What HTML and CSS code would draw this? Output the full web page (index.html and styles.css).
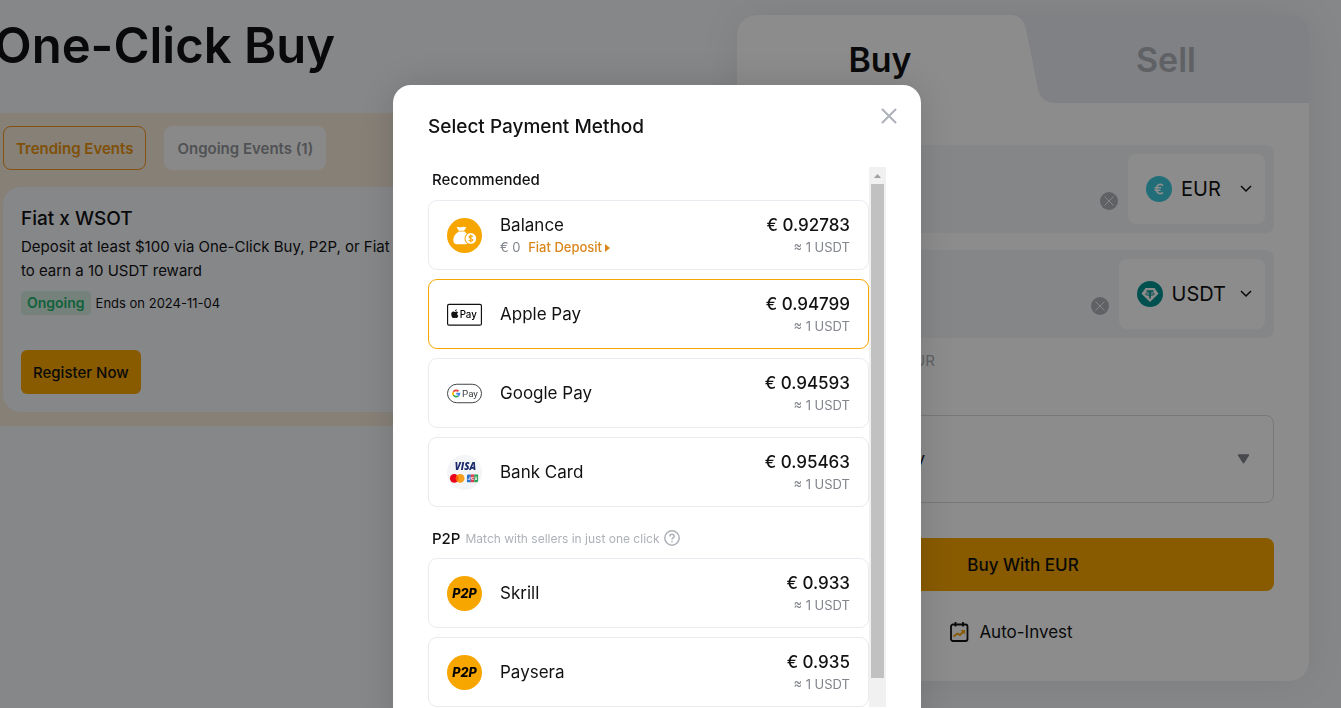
FILE: index.html
```html
<!DOCTYPE html>
<html lang="en">
  <head>
    <meta charset="UTF-8" />
    <meta name="viewport" content="width=device-width, initial-scale=1.0" />
    <title>One-Click Buy</title>
    <link rel="stylesheet" href="styles.css">
  </head>
  <body>
    <main class="page">
      <section class="events">
        <h1 class="page-title">One-Click Buy</h1>
        <div class="events-panel">
          <div class="events-tabs">
            <button class="events-tab active">Trending Events</button>
            <button class="events-tab">Ongoing Events (1)</button>
          </div>
          <article class="event-card">
            <h2>Fiat x WSOT</h2>
            <p class="event-text">Deposit at least $100 via One-Click Buy, P2P, or Fiat Deposit<br>to earn a 10 USDT reward</p>
            <div class="event-status">
              <span class="badge">Ongoing</span>
              <span class="date">Ends on 2024-11-04</span>
            </div>
            <button class="register">Register Now</button>
          </article>
        </div>
      </section>

      <section class="trade">
        <div class="trade-tabs">
          <svg class="trade-shape" viewBox="0 0 572 88" preserveAspectRatio="none">
            <path d="M273 0C282 0 287 5 289 14L301 74C303 84 310 88 320 88H572V20Q572 0 552 0Z" fill="#e9ebf2" />
          </svg>
          <button class="trade-tab active">Buy</button>
          <button class="trade-tab">Sell</button>
        </div>
        <div class="trade-body">
          <div class="field">
            <input class="amount" type="text" value="10" aria-label="I want to pay">
            <button class="clear" aria-label="Clear">
              <svg viewBox="0 0 18 18"><circle cx="9" cy="9" r="9" fill="#adb1b8" /><path d="M4.500 4.500l9 9M13.500 4.500l-9 9" stroke="#f3f5f7" fill="none" /></svg>
            </button>
            <button class="currency">
              <svg class="coin" viewBox="0 0 26 26">
                <circle cx="13" cy="13" r="13" fill="#3cc8dc" />
                <path d="M17 9.500C14 7.200 10.500 8.500 10.500 13S14 18.800 17 16.500M8.500 11.800H15M8.500 14.300H14.500" fill="none" stroke="#fff" stroke-width="1.600" />
              </svg>
              <span>EUR</span>
              <svg class="chevron" viewBox="0 0 12 8"><path d="M1 1l5 5 5-5" /></svg>
            </button>
          </div>
          <div class="field">
            <input class="amount" type="text" value="10.54" aria-label="I will receive">
            <button class="clear" aria-label="Clear">
              <svg viewBox="0 0 18 18"><circle cx="9" cy="9" r="9" fill="#adb1b8" /><path d="M4.500 4.500l9 9M13.500 4.500l-9 9" stroke="#f3f5f7" fill="none" /></svg>
            </button>
            <button class="currency">
              <svg class="coin" viewBox="0 0 26 26">
                <circle cx="13" cy="13" r="13" fill="#009393" />
                <path d="M8.500 7H17.500L21.500 12.700L13 21L4.500 12.700Z" fill="#fff" />
                <path d="M9.500 10H16.500M13 10V17.500" stroke="#009393" stroke-width="1.600" />
                <ellipse cx="13" cy="13" rx="4.500" ry="1.200" fill="none" stroke="#009393" />
              </svg>
              <span>USDT</span>
              <svg class="chevron" viewBox="0 0 12 8"><path d="M1 1l5 5 5-5" /></svg>
            </button>
          </div>
          <p class="rate">1 USDT ≈ 0.94799 EUR</p>
          <button class="method">
            <span class="method-icon"></span>
            <span>Apple Pay</span>
            <svg class="caret" viewBox="0 0 12 10"><path d="M1.500 1h9L6 8z" fill="#81858c" stroke="#81858c" stroke-width="1.500" stroke-linejoin="round" /></svg>
          </button>
          <button class="submit">Buy With EUR</button>
          <a class="auto-invest" href="#">
            <svg viewBox="0 0 20 22">
              <rect x="2" y="3.500" width="16.500" height="16.500" rx="2" fill="none" stroke="#121214" stroke-width="1.800" />
              <path d="M6.500 1v4.500M14 1v4.500" stroke="#121214" stroke-width="1.800" />
              <path d="M4.500 15.500l4-3 2.500 1.500 4-4" fill="none" stroke="#f7a600" stroke-width="1.800" />
              <path d="M11.500 9H16v4.500z" fill="#f7a600" />
            </svg>
            <span>Auto-Invest</span>
          </a>
        </div>
      </section>
    </main>

    <div class="overlay">
      <div class="modal" role="dialog" aria-labelledby="modal-title">
        <header class="modal-header">
          <h2 id="modal-title">Select Payment Method</h2>
          <button class="close" aria-label="Close">
            <svg viewBox="0 0 16 16"><path d="M1.500 1.500l13 13M14.500 1.500l-13 13" stroke="#adb1b8" stroke-width="2" stroke-linecap="round" /></svg>
          </button>
        </header>
        <div class="modal-body">
          <div class="list">
            <h3 class="group">Recommended</h3>
            <div class="option">
              <svg class="icon" viewBox="0 0 36 36">
                <circle cx="18" cy="18" r="18" fill="#f7a600" />
                <path d="M10 9.500C12 8.500 13 10 14.500 9.500S17 8.500 20 9.500L17.500 13H12Z" fill="#fff" />
                <path d="M12 14H18C21 16 23 19 23 22.500C23 25.500 21.500 27 19 27H10.500C8 27 6.500 25.500 6.500 22.500C6.500 19 9 16 12 14Z" fill="#fff" />
                <circle cx="24.500" cy="21" r="6.500" fill="#f7a600" />
                <circle cx="24.500" cy="21" r="5.500" fill="#fff" />
                <path d="M26.500 19.200C25.500 17.900 22.700 18.100 22.700 19.700S26.500 21 26.500 22.600S23.300 24.200 22.400 22.700M24.500 17V25" fill="none" stroke="#f7a600" stroke-width="1.200" />
              </svg>
              <div class="name">
                <span>Balance</span>
                <small>€ 0 <a href="#">Fiat Deposit <svg class="arrow" viewBox="0 0 5 8"><path d="M0 0l5 4-5 4z" fill="#d9861b" /></svg></a></small>
              </div>
              <div class="price"><span>€ 0.92783</span><small>≈ 1 USDT</small></div>
            </div>
            <button class="option selected">
              <svg class="icon" viewBox="0 0 36 36">
                <rect x="0.600" y="7.500" width="34.800" height="21.500" rx="1.500" fill="#fff" stroke="#121214" stroke-width="1.200" />
                <path d="M10.600 15.200C9.700 14.700 9 15.300 8.300 15.300C7.500 15.300 7 14.800 6.200 15C4.500 15.400 4 17.300 4.600 19.200C5 20.600 5.900 21.800 6.700 21.700C7.300 21.600 7.600 21.300 8.300 21.300S9.200 21.700 9.800 21.700C10.700 21.600 11.400 20.400 11.700 19.400C10 18.600 10.100 16.500 11.500 15.800C11.300 15.500 11 15.300 10.600 15.200ZM8.200 14.700C8.200 13.600 9 12.700 10 12.600C10.100 13.700 9.200 14.700 8.200 14.700Z" fill="#121214" />
                <text class="apple-word" x="13" y="21.500">Pay</text>
              </svg>
              <span class="name">Apple Pay</span>
              <span class="price"><span>€ 0.94799</span><small>≈ 1 USDT</small></span>
            </button>
            <button class="option">
              <svg class="icon" viewBox="0 0 36 36">
                <rect x="0.500" y="8.500" width="35" height="19" rx="9.500" fill="#fff" stroke="#3c4043" />
                <g fill="none" stroke-width="1.800">
                  <path d="M11.800 15.900A3.300 3.300 0 0 0 6.600 16.300" stroke="#ea4335" />
                  <path d="M6.600 16.300A3.300 3.300 0 0 0 6.600 19.700" stroke="#fbbc04" />
                  <path d="M6.600 19.700A3.300 3.300 0 0 0 11.600 20.400" stroke="#34a853" />
                  <path d="M11.600 20.400A3.300 3.300 0 0 0 12.700 18.200H9.500" stroke="#4285f4" />
                </g>
                <text class="google-word" x="15.500" y="21.500">Pay</text>
              </svg>
              <span class="name">Google Pay</span>
              <span class="price"><span>€ 0.94593</span><small>≈ 1 USDT</small></span>
            </button>
            <button class="option">
              <svg class="icon" viewBox="0 0 36 36">
                <circle cx="18" cy="18" r="18" fill="#f3f5f7" />
                <text class="visa-word" x="8" y="15.500">VISA</text>
                <circle cx="7.500" cy="24" r="4.500" fill="#eb001b" />
                <circle cx="13.500" cy="24" r="4.500" fill="#f79e1b" />
                <path d="M10.500 20.700A4.500 4.500 0 0 1 10.500 27.300A4.500 4.500 0 0 1 10.500 20.700Z" fill="#ff5f00" />
                <path d="M22 20H24.500V28H20.500V21.500Q20.500 20 22 20Z" fill="#2b70c9" />
                <path d="M24.500 20H28V28H24.500Z" fill="#e03a50" />
                <path d="M28 20H32V26.500Q32 28 30.500 28H28Z" fill="#28a055" />
                <path d="M23.500 22.500V25H21.200M27.500 23H25.300V25H27.500M28.800 22.800H31M28.800 24H31M28.800 25.200H31" fill="none" stroke="#fff" stroke-width="0.800" />
              </svg>
              <span class="name">Bank Card</span>
              <span class="price"><span>€ 0.95463</span><small>≈ 1 USDT</small></span>
            </button>

            <h3 class="group p2p-group">P2P
              <small>Match with sellers in just one click</small>
              <svg class="help" viewBox="0 0 16 16">
                <circle cx="8" cy="8" r="7.200" fill="none" stroke="#adb1b8" stroke-width="1.500" />
                <path d="M5.900 6.400C5.900 3.700 10.200 3.700 10.200 6.300C10.200 7.900 8 7.900 8 9.500M8 10.700V12.200" fill="none" stroke="#adb1b8" stroke-width="1.500" />
              </svg>
            </h3>
            <button class="option">
              <svg class="icon" viewBox="0 0 36 36"><circle cx="18" cy="18" r="18" fill="#f7a600" /><text class="p2p-word" x="18" y="23">P2P</text></svg>
              <span class="name">Skrill</span>
              <span class="price"><span>€ 0.933</span><small>≈ 1 USDT</small></span>
            </button>
            <button class="option">
              <svg class="icon" viewBox="0 0 36 36"><circle cx="18" cy="18" r="18" fill="#f7a600" /><text class="p2p-word" x="18" y="23">P2P</text></svg>
              <span class="name">Paysera</span>
              <span class="price"><span>€ 0.935</span><small>≈ 1 USDT</small></span>
            </button>
          </div>
          <div class="scrollbar">
            <svg viewBox="0 0 17 17"><path d="M5 11l3.500-4 3.500 4z" fill="#a0a0a0" /></svg>
            <div class="thumb"></div>
          </div>
        </div>
      </div>
    </div>
  </body>
</html>
```

FILE: styles.css
```css
* {
  margin: 0;
  padding: 0;
  box-sizing: border-box;
}

body {
  height: 100vh;
  overflow: hidden;
  background-color: #f4f6f9;
  color: #121214;
  font-family: Inter, "Noto Sans", sans-serif;
  font-size: 15px;
}

button,
input {
  border: none;
  background: none;
  color: inherit;
  font: inherit;
}

button {
  cursor: pointer;
}

a {
  color: inherit;
  text-decoration: none;
}

h1,
h2,
h3 {
  font-weight: 500;
}

.page {
  display: grid;
  grid-template-columns: minmax(0, 1fr) minmax(0, 572px);
  gap: 36px;
  align-items: start;
  margin-left: -6px;
  padding: 15px 32px 0 0;
}

/* events */
.page-title {
  font-size: 49px;
  line-height: 62px;
  font-weight: 600;
}

.events-panel {
  margin-top: 36px;
  padding: 13px 9px 14px;
  border-radius: 9px;
  background-color: #f4e9d9;
}

.events-tabs {
  display: flex;
  gap: 18px;
}

.events-tab {
  height: 44px;
  padding: 0 12px;
  border: 1px solid #fafafa;
  border-radius: 8px;
  background-color: #fafafa;
  color: #92959b;
  font-weight: 600;
}

.events-tab.active {
  border-color: #f0941c;
  background: none;
  color: #e8930c;
}

.event-card {
  margin-top: 17px;
  padding: 18px;
  border-radius: 18px;
  background-color: #f4f6f9;
}

.event-card h2 {
  font-size: 19px;
  line-height: 28px;
}

.event-text {
  margin-top: 2px;
  line-height: 24px;
  white-space: nowrap;
}

.event-status {
  display: flex;
  align-items: center;
  gap: 5px;
  margin-top: 8px;
  font-size: 13px;
}

.badge {
  padding: 0 6px;
  border-radius: 4px;
  background-color: #d5ebe1;
  color: #20b26c;
  font-size: 14px;
  line-height: 24px;
  font-weight: 600;
}

.register {
  height: 44px;
  margin-top: 35px;
  padding: 0 12px;
  border-radius: 6px;
  background-color: #f7a600;
  font-weight: 500;
}

/* buy form */
.trade {
  border-radius: 20px;
  background-color: #fff;
  box-shadow: 0 0 40px rgba(18, 18, 20, 0.08);
}

.trade-tabs {
  position: relative;
  display: grid;
  grid-template-columns: 1fr 1fr;
}

.trade-shape {
  position: absolute;
  width: 100%;
  height: 100%;
}

.trade-tab {
  position: relative;
  height: 88px;
  color: #adb1b8;
  font-size: 34px;
  font-weight: 600;
}

.trade-tab.active {
  color: #121214;
}

.trade-body {
  display: flex;
  flex-direction: column;
  padding: 42px 35px 37px;
}

.field {
  display: flex;
  gap: 10px;
  height: 88px;
  margin-bottom: 17px;
  padding: 9px;
  border-radius: 8px;
  background-color: #f3f5f7;
}

.amount {
  flex: 1;
  min-width: 0;
  padding: 24px 9px 0;
  font-size: 20px;
}

.clear {
  padding-top: 24px;
}

.clear svg {
  display: block;
  width: 18px;
}

.currency {
  display: flex;
  align-items: center;
  min-width: 137px;
  padding: 0 13px 0 18px;
  border-radius: 8px;
  background-color: #fff;
  font-size: 20px;
}

.currency span {
  margin-right: 14px;
}

.coin {
  width: 26px;
  margin-right: 9px;
}

.chevron {
  width: 12px;
  margin-left: auto;
  fill: none;
  stroke: #121214;
  stroke-width: 1.5;
}

.rate {
  margin-top: -4px;
  color: #adb1b8;
  line-height: 20px;
}

.method {
  display: flex;
  align-items: center;
  gap: 18px;
  height: 88px;
  margin-top: 44px;
  padding: 0 23px 0 18px;
  border: 1px solid #d7dade;
  border-radius: 8px;
  font-size: 17px;
}

.method-icon {
  width: 35px;
  height: 22px;
  border: 1px solid #121214;
  border-radius: 2px;
}

.caret {
  width: 13px;
  margin-left: auto;
}

.submit {
  height: 53px;
  margin-top: 35px;
  border-radius: 8px;
  background-color: #f7a600;
  font-size: 17px;
  font-weight: 500;
}

.auto-invest {
  display: flex;
  justify-content: center;
  align-items: center;
  gap: 10px;
  margin-top: 29px;
  padding-right: 24px;
  font-size: 17px;
  line-height: 24px;
}

.auto-invest svg {
  width: 20px;
}

/* payment method dialog */
.overlay {
  position: fixed;
  inset: 0;
  display: flex;
  justify-content: center;
  align-items: flex-start;
  padding: 85px 27px 0 0;
  overflow: hidden;
  background-color: rgba(0, 0, 0, 0.45);
}

.modal {
  width: 528px;
  padding: 0 35px 35px;
  border-radius: 18px;
  background-color: #fff;
  box-shadow: 0 0 40px rgba(0, 0, 0, 0.15);
}

.modal-header {
  display: flex;
  justify-content: space-between;
  margin-right: -11px;
}

.modal-header h2 {
  padding: 27px 0 25px;
  font-size: 19px;
  line-height: 30px;
}

.close {
  align-self: flex-start;
  margin-top: 23px;
}

.close svg {
  display: block;
  width: 16px;
}

.modal-body {
  display: flex;
}

.list {
  flex: 1;
  display: flex;
  flex-direction: column;
  gap: 9px;
}

.group {
  display: flex;
  align-items: center;
  gap: 5px;
  height: 24px;
  padding-left: 4px;
  font-size: 15px;
}

.group small {
  color: #adb1b8;
  font-size: 12px;
  font-weight: 400;
}

.p2p-group {
  height: 33px;
  padding-top: 11px;
}

.help {
  width: 16px;
}

.option {
  display: flex;
  align-items: center;
  height: 70px;
  padding: 0 18px;
  border: 1px solid #e9ebf0;
  border-radius: 9px;
  text-align: left;
}

.option.selected {
  border-color: #f7a600;
}

.icon {
  width: 35px;
  margin-right: 18px;
}

.name,
.price {
  display: flex;
  flex-direction: column;
  font-size: 17px;
  line-height: 24px;
}

.name {
  flex: 1;
}

.price {
  text-align: right;
  font-weight: 500;
}

.option small {
  color: #81858c;
  font-size: 13px;
  line-height: 21px;
  font-weight: 400;
}

.name a {
  margin-left: 4px;
  color: #d9861b;
  font-weight: 500;
}

.arrow {
  width: 5px;
}

.apple-word {
  font: 500 10px Inter, sans-serif;
}

.google-word {
  font: 10px Roboto, sans-serif;
  fill: #3c4043;
}

.visa-word {
  font: italic 800 10px "Open Sans", sans-serif;
  fill: #1a2a6c;
}

.p2p-word {
  font: italic 800 13px Inter, sans-serif;
  text-anchor: middle;
}

.scrollbar {
  display: flex;
  flex-direction: column;
  width: 17px;
  background-color: #f1f1f1;
}

.thumb {
  height: calc(100% - 46px);
  margin: 0 2px;
  background-color: #c1c1c1;
}
```
